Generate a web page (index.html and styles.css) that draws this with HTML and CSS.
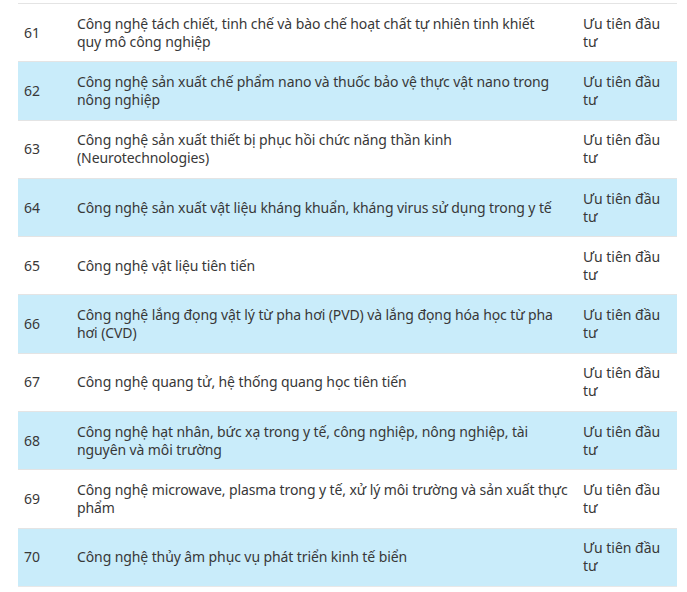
FILE: index.html
```html
<!DOCTYPE html>
<html lang="vi">
<head>
<meta charset="utf-8">
<link rel="stylesheet" href="styles.css">
</head>
<body>
<table class="tbl">
  <colgroup><col class="c1"><col class="c2"><col class="c3"></colgroup>
  <tbody>
    <tr><td>61</td><td>Công nghệ tách chiết, tinh chế và bào chế hoạt chất tự nhiên tinh khiết<br>quy mô công nghiệp</td><td>Ưu tiên đầu tư</td></tr>
    <tr class="alt"><td>62</td><td>Công nghệ sản xuất chế phẩm nano và thuốc bảo vệ thực vật nano trong nông nghiệp</td><td>Ưu tiên đầu tư</td></tr>
    <tr><td>63</td><td>Công nghệ sản xuất thiết bị phục hồi chức năng thần kinh (Neurotechnologies)</td><td>Ưu tiên đầu tư</td></tr>
    <tr class="alt"><td>64</td><td>Công nghệ sản xuất vật liệu kháng khuẩn, kháng virus sử dụng trong y tế</td><td>Ưu tiên đầu tư</td></tr>
    <tr><td>65</td><td>Công nghệ vật liệu tiên tiến</td><td>Ưu tiên đầu tư</td></tr>
    <tr class="alt"><td>66</td><td>Công nghệ lắng đọng vật lý từ pha hơi (PVD) và lắng đọng hóa học từ pha hơi (CVD)</td><td>Ưu tiên đầu tư</td></tr>
    <tr><td>67</td><td>Công nghệ quang tử, hệ thống quang học tiên tiến</td><td>Ưu tiên đầu tư</td></tr>
    <tr class="alt"><td>68</td><td>Công nghệ hạt nhân, bức xạ trong y tế, công nghiệp, nông nghiệp, tài nguyên và môi trường</td><td>Ưu tiên đầu tư</td></tr>
    <tr><td>69</td><td>Công nghệ microwave, plasma trong y tế, xử lý môi trường và sản xuất thực phẩm</td><td>Ưu tiên đầu tư</td></tr>
    <tr class="alt"><td>70</td><td>Công nghệ thủy âm phục vụ phát triển kinh tế biển</td><td>Ưu tiên đầu tư</td></tr>
  </tbody>
</table>
</body>
</html>
```
FILE: styles.css
```css
html, body { margin: 0; padding: 0; background: #fff; }
body { padding: 3px 10px 0 18px; }
.tbl {
  width: 659px;
  border-collapse: collapse;
  table-layout: fixed;
  font-family: "Noto Sans", sans-serif;
  font-size: 14px;
  line-height: 18px;
  color: #383838;
}
.c1 { width: 53px; }
.c3 { width: 100px; }
.tbl tr { height: 58.3px; border-top: 1px solid #e4e4e4; }
.tbl tr:last-child { border-bottom: 1px solid #e8e8e8; }
.tbl tr.alt { background: #c9ecfa; }
.tbl td { padding: 0 6px; vertical-align: middle; }
.tbl td:nth-child(2) { letter-spacing: -0.1px; padding-right: 5px; }
.tbl td:last-child { padding-right: 4px; }
```
